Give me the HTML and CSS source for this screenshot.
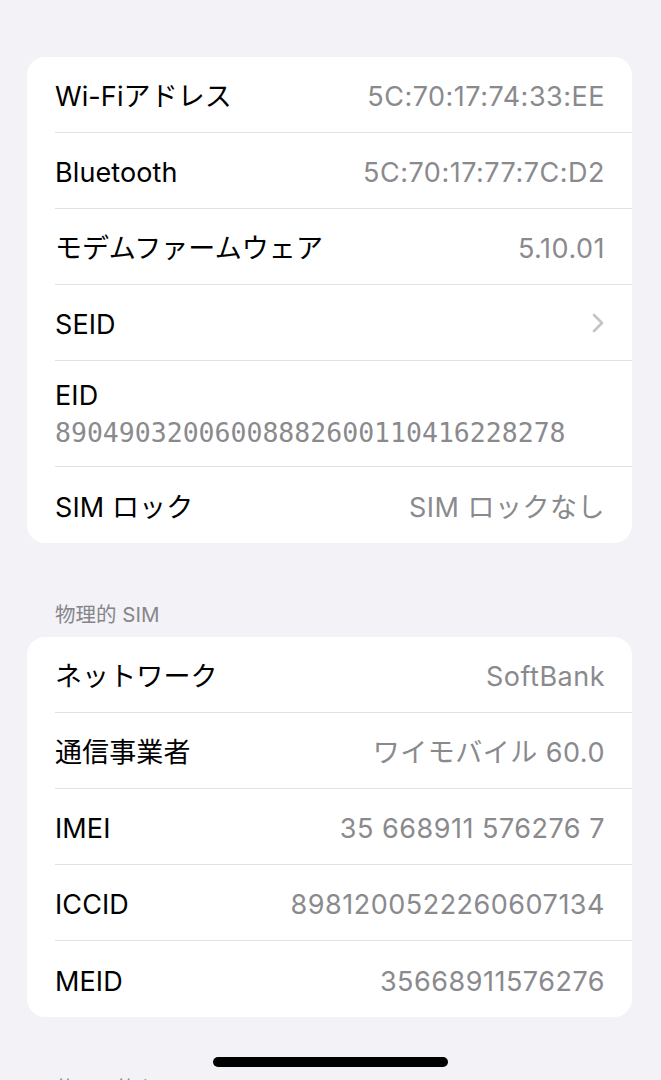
FILE: index.html
```html
<!DOCTYPE html>
<html lang="ja">
<head>
<meta charset="UTF-8">
<meta name="viewport" content="width=device-width, initial-scale=1.0">
<title>情報</title>
<link rel="stylesheet" href="styles.css">
</head>
<body>
  <div class="page">
    <div class="card">
      <div class="row">
        <span class="label">Wi-Fiアドレス</span>
        <span class="value">5C:70:17:74:33:EE</span>
      </div>
      <div class="row">
        <span class="label">Bluetooth</span>
        <span class="value">5C:70:17:77:7C:D2</span>
      </div>
      <div class="row">
        <span class="label">モデムファームウェア</span>
        <span class="value">5.10.01</span>
      </div>
      <div class="row">
        <span class="label">SEID</span>
        <svg class="chevron" width="12" height="20" viewBox="0 0 12 20">
          <path d="M2 2 L10 10 L2 18" fill="none" stroke="#c4c4c7" stroke-width="2.6" stroke-linecap="round" stroke-linejoin="round"/>
        </svg>
      </div>
      <div class="row row-tall">
        <span class="label">EID</span>
        <span class="mono">89049032006008882600110416228278</span>
      </div>
      <div class="row">
        <span class="label">SIM ロック</span>
        <span class="value">SIM ロックなし</span>
      </div>
    </div>

    <div class="section-title">物理的 SIM</div>
    <div class="card">
      <div class="row">
        <span class="label">ネットワーク</span>
        <span class="value">SoftBank</span>
      </div>
      <div class="row">
        <span class="label">通信事業者</span>
        <span class="value">ワイモバイル 60.0</span>
      </div>
      <div class="row">
        <span class="label">IMEI</span>
        <span class="value">35 668911 576276 7</span>
      </div>
      <div class="row">
        <span class="label">ICCID</span>
        <span class="value">8981200522260607134</span>
      </div>
      <div class="row">
        <span class="label">MEID</span>
        <span class="value">35668911576276</span>
      </div>
    </div>

    <div class="section-title">使用可能な SIM</div>
  </div>

  <div class="home-bar"></div>
</body>
</html>
```

FILE: styles.css
```css
body {
  margin: 0;
  padding: 0;
  background-color: #f2f2f7;
  font-family: Inter, "Noto Sans CJK JP", sans-serif;
  color: #000;
  overflow: hidden;
}

.page {
  padding: 57px 29px 40px 27px;
}

.card {
  background-color: #fff;
  border-radius: 18px;
  overflow: hidden;
}

.row {
  display: flex;
  justify-content: space-between;
  align-items: center;
  box-sizing: border-box;
  height: 76px;
  margin-left: 28px;
  padding: 5px 27px 0 0;
  border-bottom: 1px solid #e2e2e4;
}

.row:last-child {
  border-bottom: none;
}

.row-tall {
  height: 106px;
  flex-direction: column;
  align-items: flex-start;
  justify-content: flex-start;
  padding-top: 18px;
}

.label {
  font-size: 27px;
  line-height: 34px;
  letter-spacing: 0.1px;
}

.value {
  font-size: 27px;
  line-height: 34px;
  letter-spacing: 0.5px;
  color: #8a8a8e;
}

.mono {
  font-family: "DejaVu Sans Mono", monospace;
  font-size: 26.5px;
  line-height: 40px;
  color: #8a8a8e;
}

.chevron {
  margin: -4px 1px 0 0;
}

.section-title {
  margin: 60px 0 10px 28px;
  font-size: 20.5px;
  line-height: 24px;
  color: #86868a;
}

.home-bar {
  position: absolute;
  top: 1057px;
  left: 213px;
  width: 235px;
  height: 10px;
  border-radius: 5px;
  background-color: #000;
}
```
